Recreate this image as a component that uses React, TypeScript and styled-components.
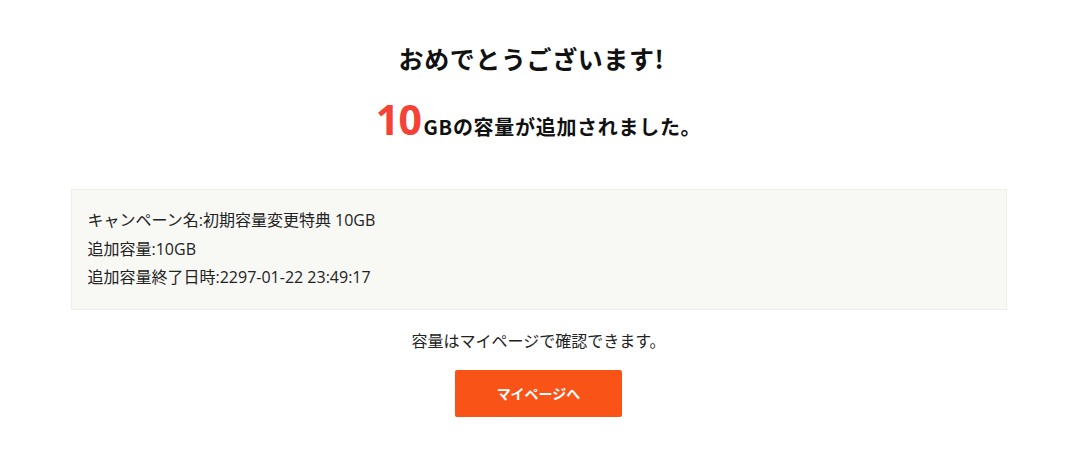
import React from "react";
import styled, { createGlobalStyle } from "styled-components";

const Global = createGlobalStyle`
  html, body { margin: 0; padding: 0; background: #fff; }
  body { font-family: "Open Sans", "Noto Sans CJK JP", sans-serif; color: #222; }
`;

const Page = styled.div`
  width: 1080px;
  display: flex;
  flex-direction: column;
  align-items: center;
  padding: 40px 3px 0 0;
  box-sizing: border-box;
`;

const Title = styled.h1`
  margin: 0;
  font-family: "Noto Sans CJK JP", sans-serif;
  font-size: 25px;
  letter-spacing: 0.6px;
  font-weight: 700;
  line-height: 36px;
  color: #111;
  padding-right: 14px;
`;

const Sub = styled.h2`
  margin: 18px 0 0;
  font-family: "Noto Sans CJK JP", sans-serif;
  font-size: 20px;
  letter-spacing: 0.7px;
  font-weight: 700;
  line-height: 50px;
  color: #111;
  display: flex;
  align-items: baseline;
  padding-right: 0;
`;

const Big = styled.span`
  font-family: "Open Sans", sans-serif;
  font-size: 41px;
  letter-spacing: -0.5px;
  color: #f44336;
  font-weight: 700;
  margin-right: 2px;
`;

const InfoBox = styled.div`
  margin-top: 37px;
  width: 936px;
  box-sizing: border-box;
  background: #f8f8f5;
  border: 1px solid #eeeeea;
  padding: 16px 16px 17px;
  font-size: 16px;
  line-height: 28.5px;
  color: #222;
`;

const Line = styled.div``;

const Note = styled.p`
  margin: 17px 0 0;
  font-size: 16px;
  line-height: 28px;
  color: #222;
`;

const Button = styled.button`
  margin-top: 15px;
  width: 167px;
  height: 47px;
  border: none;
  border-radius: 2px;
  background: #fa5318;
  color: #fff;
  font-family: "Noto Sans CJK JP", sans-serif;
  font-size: 14px;
  font-weight: 700;
  cursor: pointer;
`;

export default function App() {
  return (
    <>
      <Global />
      <Page>
        <Title>おめでとうございます!</Title>
        <Sub>
          <Big>10</Big>GBの容量が追加されました。
        </Sub>
        <InfoBox>
          <Line>キャンペーン名:初期容量変更特典 10GB</Line>
          <Line>追加容量:10GB</Line>
          <Line>追加容量終了日時:2297-01-22 23:49:17</Line>
        </InfoBox>
        <Note>容量はマイページで確認できます。</Note>
        <Button>マイページへ</Button>
      </Page>
    </>
  );
}
